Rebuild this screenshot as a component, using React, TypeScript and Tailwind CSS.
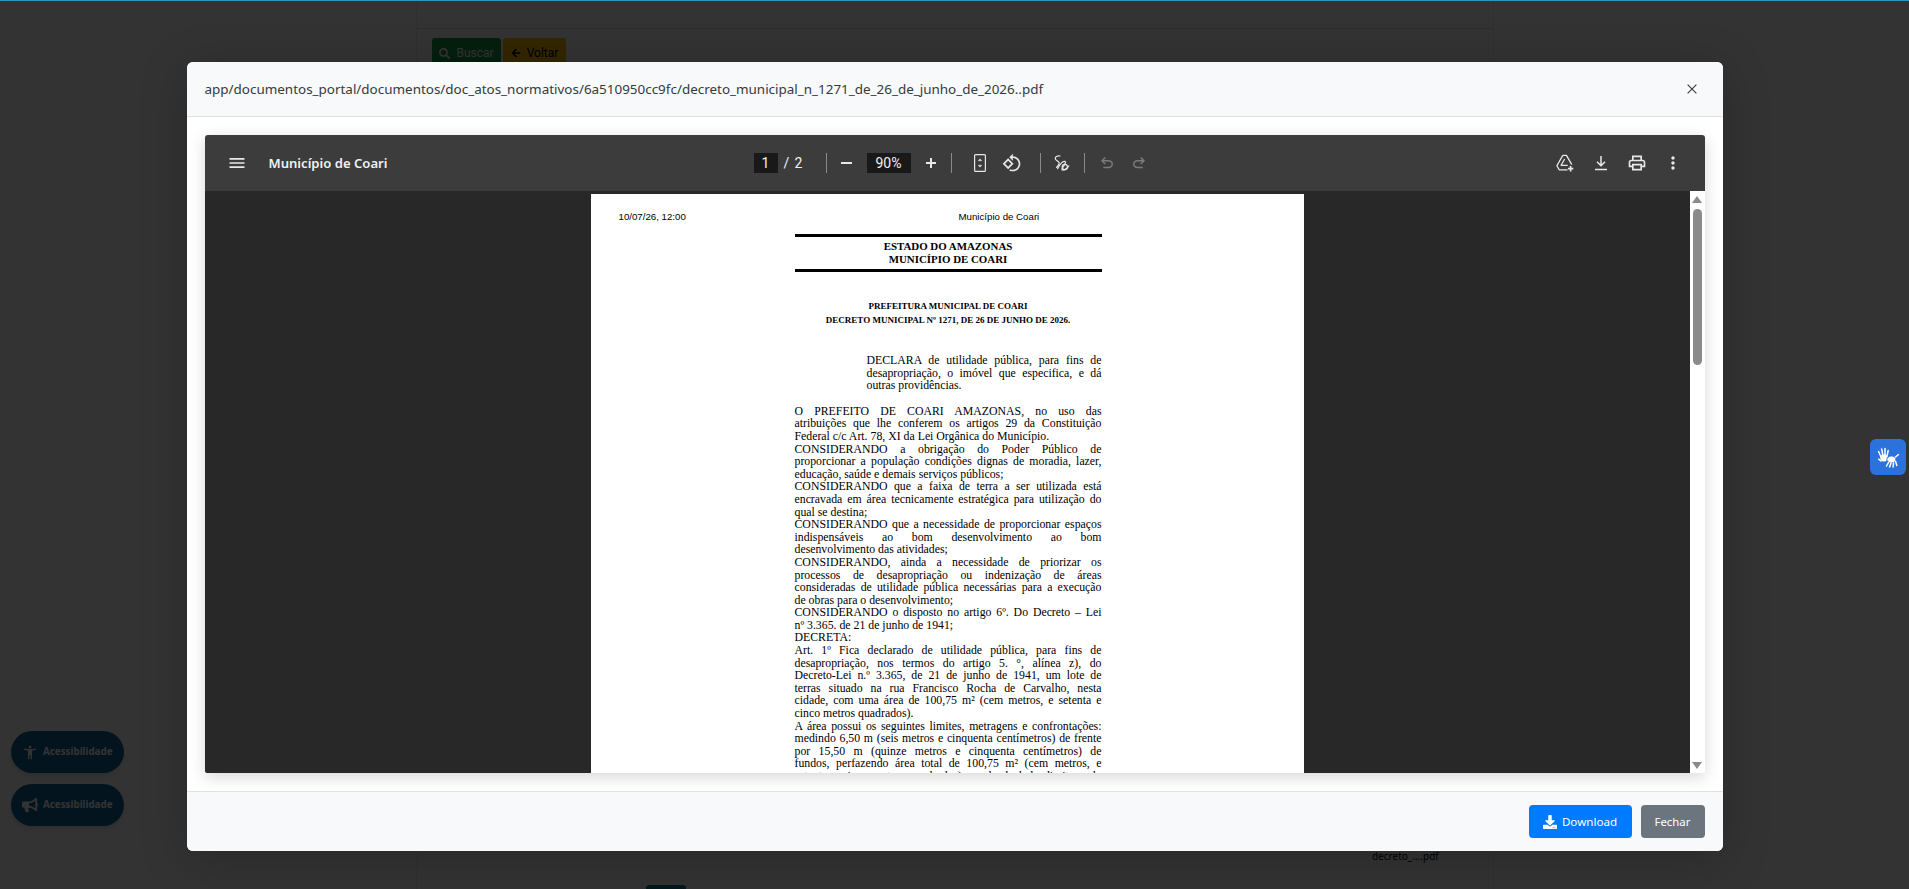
import { FaArrowLeft, FaBullhorn, FaDownload, FaSearch } from 'react-icons/fa';
import { MdAccessibilityNew } from 'react-icons/md';

const LINES: [string, boolean][] = [
  ['O PREFEITO DE COARI AMAZONAS, no uso das', true],
  ['atribuições que lhe conferem os artigos 29 da Constituição', true],
  ['Federal c/c Art. 78, XI da Lei Orgânica do Município.', false],
  ['CONSIDERANDO a obrigação do Poder Público de', true],
  ['proporcionar a população condições dignas de moradia, lazer,', true],
  ['educação, saúde e demais serviços públicos;', false],
  ['CONSIDERANDO que a faixa de terra a ser utilizada está', true],
  ['encravada em área tecnicamente estratégica para utilização do', true],
  ['qual se destina;', false],
  ['CONSIDERANDO que a necessidade de proporcionar espaços', true],
  ['indispensáveis ao bom desenvolvimento ao bom', true],
  ['desenvolvimento das atividades;', false],
  ['CONSIDERANDO, ainda a necessidade de priorizar os', true],
  ['processos de desapropriação ou indenização de áreas', true],
  ['consideradas de utilidade pública necessárias para a execução', true],
  ['de obras para o desenvolvimento;', false],
  ['CONSIDERANDO o disposto no artigo 6º. Do Decreto – Lei', true],
  ['nº 3.365. de 21 de junho de 1941;', false],
  ['DECRETA:', false],
  ['Art. 1º Fica declarado de utilidade pública, para fins de', true],
  ['desapropriação, nos termos do artigo 5. °, alínea z), do', true],
  ['Decreto-Lei n.º 3.365, de 21 de junho de 1941, um lote de', true],
  ['terras situado na rua Francisco Rocha de Carvalho, nesta', true],
  ['cidade, com uma área de 100,75 m² (cem metros, e setenta e', true],
  ['cinco metros quadrados).', false],
  ['A área possui os seguintes limites, metragens e confrontações:', true],
  ['medindo 6,50 m (seis metros e cinquenta centímetros) de frente', true],
  ['por 15,50 m (quinze metros e cinquenta centímetros) de', true],
  ['fundos, perfazendo área total de 100,75 m² (cem metros, e', true],
  ['setenta e cinco metros quadrados), sendo do lado direito e do', true],
];

function ToolButton({ children, dim }: { children: React.ReactNode; dim?: boolean }) {
  return (
    <button type="button" className={`flex h-8 w-8 shrink-0 items-center justify-center ${dim ? 'text-[#7a7a7a]' : 'text-[#e8e8e8]'}`}>
      {children}
    </button>
  );
}

function Separator({ className }: { className: string }) {
  return <div className={`h-5 w-px shrink-0 bg-[#8a8a8a] ${className}`} />;
}

function PdfToolbar() {
  return (
    <div className="flex h-14 shrink-0 items-center bg-[#3c3c3c] font-['Roboto',sans-serif] text-[#f1f1f1]">
      <div className="flex w-[549px] shrink-0 items-center pl-4">
        <ToolButton>
          <svg width="20" height="20" viewBox="0 0 24 24" fill="currentColor"><path d="M3 18h18v-2H3v2zm0-5h18v-2H3v2zm0-7v2h18V6H3z" /></svg>
        </ToolButton>
        <span className="ml-4 pt-[1px] font-['Noto_Sans',sans-serif] text-[13.1px] font-semibold">Município de Coari</span>
      </div>

      <div className="flex items-center">
        <div className="flex h-5 w-6 items-center justify-center bg-[#191919] text-[14px]">1</div>
        <span className="ml-[6px] w-[10px] text-[14px]">/</span>
        <span className="w-[32px] pl-[1px] text-[14px]">2</span>
        <Separator className="" />
        <div className="ml-1"><ToolButton><div className="h-0.5 w-[11px] bg-current" /></ToolButton></div>
        <div className="ml-1 flex h-5 w-11 items-center justify-center bg-[#191919] text-[14px]">90%</div>
        <div className="ml-1"><ToolButton>
          <svg width="12" height="12" viewBox="0 0 12 12" fill="currentColor"><path d="M5 1h2v4h4v2H7v4H5V7H1V5h4z" /></svg>
        </ToolButton></div>
        <Separator className="ml-1" />
        <div className="ml-3"><ToolButton>
          <svg width="20" height="20" viewBox="0 0 20 20" fill="none" stroke="currentColor" strokeWidth="1.2">
            <rect x="4.6" y="1.6" width="10.8" height="16.8" rx="1" />
            <path d="M10 5.8l1.8 2H8.2zM10 14.2l1.8-2H8.2z" fill="currentColor" strokeWidth="0.4" />
          </svg>
        </ToolButton></div>
        <ToolButton>
          <svg width="20" height="20" viewBox="0 0 24 24" fill="currentColor"><path d="M7.34 6.41L.86 12.9l6.49 6.48 6.49-6.48-6.5-6.49zM3.69 12.9l3.66-3.66L11 12.9l-3.66 3.66-3.65-3.66zm15.67-6.26C17.61 4.88 15.3 4 13 4V.76L8.76 5 13 9.24V6c1.79 0 3.58.68 4.95 2.05 2.73 2.73 2.73 7.17 0 9.9C16.58 19.32 14.79 20 13 20c-.97 0-1.94-.21-2.84-.61l-1.49 1.49C10.02 21.62 11.51 22 13 22c2.3 0 4.61-.88 6.36-2.64 3.52-3.51 3.52-9.21 0-12.72z" /></svg>
        </ToolButton>
        <Separator className="ml-3" />
        <div className="ml-[5px]"><ToolButton>
          <svg width="20" height="20" viewBox="0 0 20 20" fill="none" stroke="currentColor" strokeWidth="1.2" strokeLinecap="round" strokeLinejoin="round">
            <path d="M8 3C6 2.4 3.4 3.6 3.2 5.4c-.2 1.8 3.4 2.6 4 4.4.5 1.5-1.4 3-2.6 4.6" />
            <path d="M5.6 15.6c2.4-4.4 5.2-7.6 7-7.2 1.6.4.6 2.6-.6 4.2-1.4 1.8-2.8 4-1.6 4.4 1.8.6 5-1.6 6.4-4" />
            <circle cx="12.8" cy="14" r="2.6" />
          </svg>
        </ToolButton></div>
        <Separator className="ml-[6px]" />
        <div className="ml-[6px]"><ToolButton dim>
          <svg width="18" height="18" viewBox="0 0 24 24" fill="currentColor"><path d="M7 19v-2h7.1q1.575 0 2.738-1T18 13.5q0-1.5-1.162-2.5T14.1 10H7.8l2.6 2.6L9 14 4 9l5-5 1.4 1.4L7.8 8h6.3q2.425 0 4.163 1.575T20 13.5q0 2.35-1.737 3.925T14.1 19H7z" /></svg>
        </ToolButton></div>
        <ToolButton dim>
          <svg width="18" height="18" viewBox="0 0 24 24" fill="currentColor"><path d="M17 19v-2H9.9q-1.575 0-2.738-1T6 13.5q0-1.5 1.162-2.5T9.9 10h6.3l-2.6 2.6L15 14l5-5-5-5-1.4 1.4L16.2 8H9.9q-2.425 0-4.163 1.575T4 13.5q0 2.35 1.737 3.925T9.9 19H17z" /></svg>
        </ToolButton>
      </div>

      <div className="ml-auto flex items-center gap-1 pr-4">
        <ToolButton>
          <svg width="20" height="20" viewBox="0 0 20 20" fill="none" stroke="currentColor" strokeWidth="1.3" strokeLinejoin="round">
            <path d="M7.8 2.4h3.6l5.4 9.2M7.8 2.4L1.9 12.8l2.3 4h8.3" />
            <path d="M9.6 6l-3.5 6.3h6.6" />
            <path d="M15.6 13v5.4M12.9 15.7h5.4" strokeWidth="1.7" />
          </svg>
        </ToolButton>
        <ToolButton>
          <svg width="18" height="18" viewBox="0 0 18 18" fill="none" stroke="currentColor" strokeWidth="1.5">
            <path d="M9 2v9.5M5 7.8l4 4 4-4M3 15.6h12" />
          </svg>
        </ToolButton>
        <ToolButton>
          <svg width="20" height="20" viewBox="0 0 24 24" fill="currentColor"><path d="M19 8h-1V3H6v5H5c-1.66 0-3 1.34-3 3v6h4v4h12v-4h4v-6c0-1.66-1.34-3-3-3zM8 5h8v3H8V5zm8 12v2H8v-4h8v2zm2-2v-2H6v2H4v-4c0-.55.45-1 1-1h14c.55 0 1 .45 1 1v4h-2z" /></svg>
        </ToolButton>
        <ToolButton>
          <svg width="20" height="20" viewBox="0 0 24 24" fill="currentColor"><path d="M12 8c1.1 0 2-.9 2-2s-.9-2-2-2-2 .9-2 2 .9 2 2 2zm0 2c-1.1 0-2 .9-2 2s.9 2 2 2 2-.9 2-2-.9-2-2-2zm0 6c-1.1 0-2 .9-2 2s.9 2 2 2 2-.9 2-2-.9-2-2-2z" /></svg>
        </ToolButton>
      </div>
    </div>
  );
}

function PdfPage() {
  return (
    <div className="mt-[3px] h-[800px] w-[713px] shrink-0 bg-white pt-[17px] text-black">
      <div className="flex pl-[28px] font-['Liberation_Sans',sans-serif] text-[9.7px] leading-3">
        <span className="w-[340px]">10/07/26, 12:00</span>
        <span>Município de Coari</span>
      </div>
      <div className="ml-[204px] mt-[11px] w-[307px] font-['Liberation_Serif',serif]">
        <div className="border-y-[3px] border-black pb-[4px] pt-[3px] text-center text-[10.9px] font-bold leading-[12.6px]">
          <div>ESTADO DO AMAZONAS</div>
          <div>MUNICÍPIO DE COARI</div>
        </div>
        <div className="mt-[28px] text-center text-[9px] font-bold leading-[13.4px]">
          <div>PREFEITURA MUNICIPAL DE COARI</div>
          <div>DECRETO MUNICIPAL Nº 1271, DE 26 DE JUNHO DE 2026.</div>
        </div>
        <div className="ml-[72px] mt-[27px] text-[11.8px] leading-[12.6px]">
          <div className="text-justify [text-align-last:justify]">DECLARA de utilidade pública, para fins de</div>
          <div className="text-justify [text-align-last:justify]">desapropriação, o imóvel que especifica, e dá</div>
          <div>outras providências.</div>
        </div>
        <div className="mt-[13px] text-[11.8px] leading-[12.6px]">
          {LINES.map(([text, justify]) => (
            <div key={text} className={justify ? 'text-justify [text-align-last:justify]' : ''}>{text}</div>
          ))}
        </div>
      </div>
    </div>
  );
}

function PdfViewer() {
  return (
    <div className="flex h-[638px] flex-col overflow-hidden rounded-t-[3px] rounded-b-[2px] shadow-[0_4px_16px_rgba(0,0,0,0.16)]">
      <PdfToolbar />
      <div className="flex min-h-0 flex-1">
        <div className="flex min-w-0 flex-1 justify-center overflow-hidden bg-[#282828]">
          <PdfPage />
        </div>
        <div className="flex w-[15px] shrink-0 flex-col items-center bg-white pb-[4px] pt-[5px]">
          <div className="h-0 w-0 border-x-[5px] border-b-[7px] border-x-transparent border-b-[#8a8a8a]" />
          <div className="mt-[6px] h-[156px] w-[9px] rounded-[5px] bg-[#8a8a8a]" />
          <div className="mt-auto h-0 w-0 border-x-[5px] border-t-[7px] border-x-transparent border-t-[#8a8a8a]" />
        </div>
      </div>
    </div>
  );
}

function Modal() {
  return (
    <div className="flex h-[789px] w-[1536px] flex-col overflow-hidden rounded-[6px] bg-white shadow-[0_8px_48px_rgba(0,0,0,0.22)] font-['Noto_Sans',sans-serif]">
      <div className="flex h-[55px] shrink-0 items-center justify-between border-b border-[#dee2e6] bg-[#f8f9fa] pl-[18px] pr-[26px]">
        <span className="text-[13.45px] text-[#343a40]">app/documentos_portal/documentos/doc_atos_normativos/6a510950cc9fc/decreto_municipal_n_1271_de_26_de_junho_de_2026..pdf</span>
        <svg width="10" height="10" viewBox="0 0 10 10" fill="none" stroke="#3d4349" strokeWidth="1.2"><path d="M.6.6l8.8 8.8M9.4.6L.6 9.4" /></svg>
      </div>
      <div className="flex-1 px-[18px] pt-[18px]">
        <PdfViewer />
      </div>
      <div className="flex h-[60px] shrink-0 items-center justify-end gap-[9px] border-t border-[#dee2e6] bg-[#f8f9fa] pr-[18px]">
        <button type="button" className="flex h-[33px] w-[103px] items-center justify-center gap-[5px] rounded-[4px] bg-[#007bff] text-[11.6px] text-white">
          <FaDownload size={14} />
          Download
        </button>
        <button type="button" className="flex h-[33px] w-[64px] items-center justify-center rounded-[4px] bg-[#6c757d] text-[11.4px] text-white">
          Fechar
        </button>
      </div>
    </div>
  );
}

function AccessButton({ icon }: { icon: React.ReactNode }) {
  return (
    <div className="flex h-[42px] w-[113px] items-center gap-[5px] rounded-full bg-[#0f649b] pl-[11px] text-[9.8px] font-bold text-white shadow-md">
      <span className="flex w-[16px] justify-center">{icon}</span>
      Acessibilidade
    </div>
  );
}

function SignHandsIcon() {
  return (
    <svg width="24" height="24" viewBox="0 0 24 24" fill="none" stroke="currentColor" strokeWidth="1.5" strokeLinecap="round">
      <path d="M5 12L2.6 6.5M7 10.5L5.6 4M9 10.5V3.5M11 11l1.2-5.5" />
      <ellipse cx="8" cy="13" rx="3.8" ry="3.4" fill="currentColor" stroke="none" />
      <path d="M5 16l-2.4-1.8" />
      <ellipse cx="15.5" cy="14.5" rx="4.6" ry="3.6" fill="currentColor" stroke="#2b72dc" strokeWidth="1" />
      <path d="M12.5 17.5L10.5 21M15 18l-1.4 4M17.5 18l-.4 4M19.6 16.5l1.2 4M19.5 12l3-2.5" />
    </svg>
  );
}

export default function App() {
  return (
    <div className="relative h-screen overflow-hidden bg-white font-['Noto_Sans',sans-serif]">
      {/* pagina por tras do modal */}
      <div className="ml-[416px] h-full w-[1078px] border-x border-[#eeeeee]">
        <div className="h-[29px] border-b border-[#e2e2e2]" />
        <div className="flex gap-[2px] pl-[15px] pt-[9px] font-['Roboto',sans-serif]">
          <button type="button" className="flex h-[34px] w-[69px] items-center justify-center gap-[6px] rounded-[3px] bg-[#1a9a4a] pb-[4px] text-[12px] text-white">
            <FaSearch size={11} />
            Buscar
          </button>
          <button type="button" className="flex h-[34px] w-[63px] items-center justify-center gap-[6px] rounded-[3px] bg-[#ffc107] pb-[4px] text-[12px] text-black">
            <FaArrowLeft size={10} />
            Voltar
          </button>
        </div>
        <div className="ml-[955px] mt-[776px] text-[10px] leading-4 text-black">decreto_....pdf</div>
        <div className="ml-[229px] mt-[21px] h-8 w-[40px] rounded-t-[3px] bg-[#0e7a8a]" />
      </div>

      <div className="absolute bottom-[63px] left-[11px] flex flex-col gap-[11px]">
        <AccessButton icon={<MdAccessibilityNew size={21} />} />
        <AccessButton icon={<FaBullhorn size={16} />} />
      </div>

      {/* backdrop e modal */}
      <div className="absolute inset-0 flex justify-center bg-black/80 pt-[62px]">
        <Modal />
      </div>

      <div className="absolute left-0 right-0 top-0 h-px bg-[#2f96c4]" />
      <div className="absolute left-[1870px] top-[439px] flex h-9 w-9 items-center justify-center rounded-[6px] bg-[#2b72dc] text-white">
        <SignHandsIcon />
      </div>
    </div>
  );
}
